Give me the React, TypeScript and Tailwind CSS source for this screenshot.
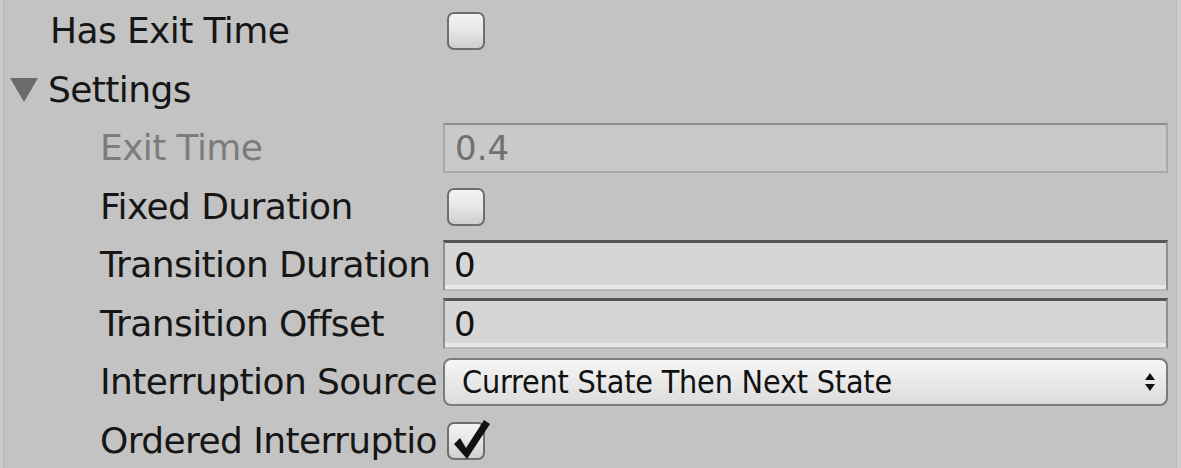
import React from "react";

const font = { fontFamily: '"DejaVu Sans", Verdana, sans-serif' };

function Checkbox({ checked }: { checked?: boolean }) {
  return (
    <div className="relative w-[38px] h-[38px] ml-[4px] rounded-[7px] border-2 border-[#6e6e6e] bg-gradient-to-b from-[#f4f4f4] via-[#e6e6e6] to-[#cfcfcf]">
      {checked && (
        <svg
          className="absolute left-[2px] top-[-7px]"
          width="40"
          height="44"
          viewBox="0 0 40 44"
        >
          <path
            d="M3 27 L9 21 L15 31 L33 3 L39 7 L16 42 Z"
            fill="#111"
          />
        </svg>
      )}
    </div>
  );
}

function Field({ value, disabled }: { value: string; disabled?: boolean }) {
  return (
    <div
      className={
        disabled
          ? "w-[725px] h-[50px] flex items-center pl-[10px] border-2 border-[#a9a9a9] border-t-[#8c8c8c] bg-[#c9c9c9] text-[#707070]"
          : "w-[725px] h-[51px] flex items-center pl-[9px] border-2 border-[#8f8f8f] border-t-[3px] border-t-[#555] border-b-[#b8b8b8] bg-[#d6d6d6] shadow-[inset_0_-4px_0_#e9e9e9] text-[#111]"
      }
    >
      <span className="text-[34px] leading-normal">{value}</span>
    </div>
  );
}

function Dropdown({ value }: { value: string }) {
  return (
    <div className="w-[725px] h-[48px] flex items-center justify-between pl-[17px] pr-[10px] rounded-[8px] border-2 border-[#7b7b7b] bg-gradient-to-b from-[#f6f6f6] to-[#dcdcdc]">
      <span
        className="text-[32px] leading-normal text-[#111] tracking-[-0.2px]"
        style={{ fontFamily: '"DejaVu Sans Condensed", "DejaVu Sans", sans-serif' }}
      >
        {value}
      </span>
      <svg width="12" height="20" viewBox="0 0 12 20">
        <path d="M6 1 L11 8 L1 8 Z" fill="#111" />
        <path d="M6 19 L11 12 L1 12 Z" fill="#111" />
      </svg>
    </div>
  );
}

function Row({
  label,
  indent,
  muted,
  children,
}: {
  label: string;
  indent?: boolean;
  muted?: boolean;
  children?: React.ReactNode;
}) {
  return (
    <div className="flex items-center h-[58.5px]">
      <div
        className={
          (indent ? "pl-[96px] w-[439px]" : "pl-[46px] w-[439px]") +
          " shrink-0 whitespace-nowrap text-[36px] tracking-[-0.6px] leading-normal " +
          (muted ? "text-[#7c7c7c]" : "text-[#161616]")
        }
      >
        {label}
      </div>
      {children}
    </div>
  );
}

export default function App() {
  return (
    <div className="w-[1181px] h-[468px] flex bg-[#c3c3c3] overflow-hidden" style={font}>
      <div className="w-[4px] bg-[#cbcbcb] border-r border-[#b6b6b6]" />
      <div className="flex-1 pt-[2px]">
        <Row label="Has Exit Time">
          <Checkbox />
        </Row>
        <div className="flex items-center h-[58.5px]">
          <svg className="ml-[6px] mr-[10px]" width="28" height="24" viewBox="0 0 28 24">
            <path d="M0 0 L28 0 L14 24 Z" fill="#6c6c6c" />
          </svg>
          <span className="text-[36px] tracking-[-0.6px] leading-normal text-[#161616]">
            Settings
          </span>
        </div>
        <Row label="Exit Time" indent muted>
          <Field value="0.4" disabled />
        </Row>
        <Row label="Fixed Duration" indent>
          <Checkbox />
        </Row>
        <Row label="Transition Duration" indent>
          <Field value="0" />
        </Row>
        <Row label="Transition Offset" indent>
          <Field value="0" />
        </Row>
        <Row label="Interruption Source" indent>
          <Dropdown value="Current State Then Next State" />
        </Row>
        <Row label="Ordered Interruptio" indent>
          <Checkbox checked />
        </Row>
      </div>
      <div className="w-[5px] bg-[#cdcdcd] border-l border-[#b9b9b9]" />
    </div>
  );
}
